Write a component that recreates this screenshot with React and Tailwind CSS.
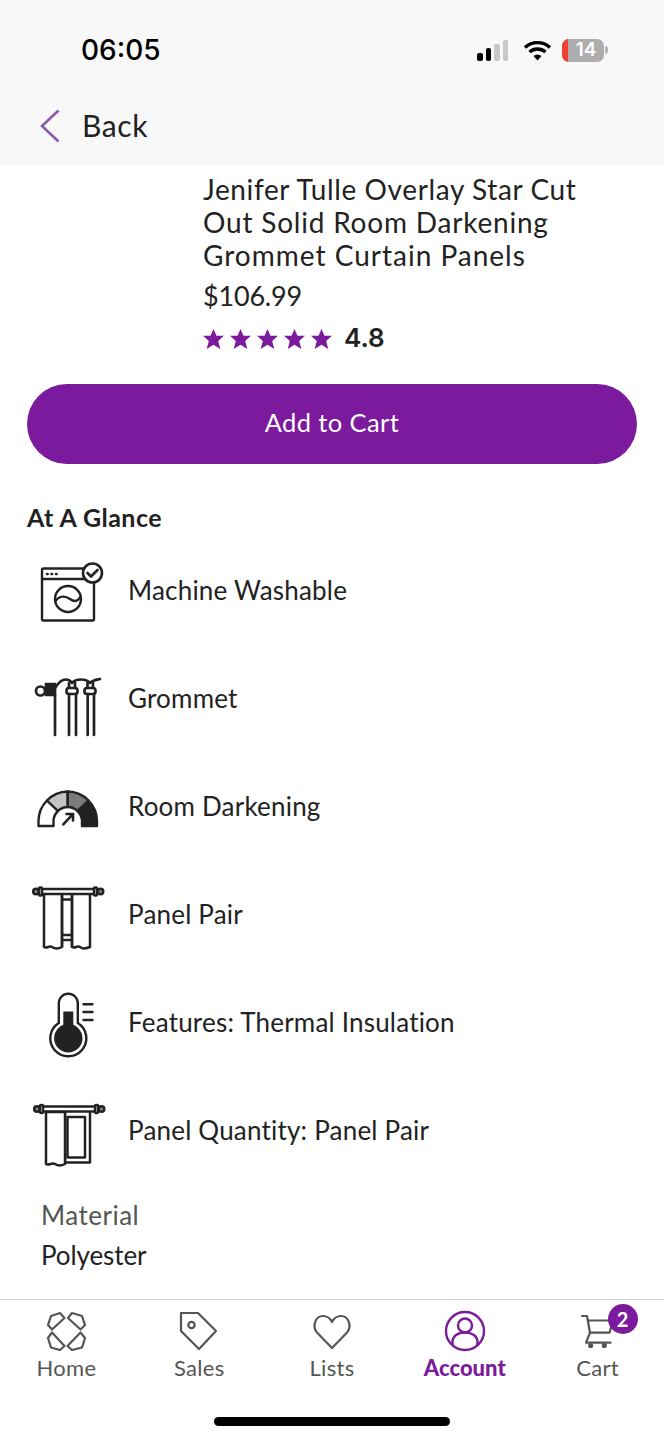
const FONT = "font-['Lato','Noto_Sans',sans-serif]";

function Washer() {
  return (
    <svg width="80" height="80" viewBox="0 0 80 80" fill="none" stroke="#222" strokeWidth="2.4" strokeLinejoin="round" strokeLinecap="round">
      <rect x="13" y="17.5" width="52" height="52" rx="1.5" />
      <path d="M13 28H65" />
      <path d="M18 23h.6M22.5 23h.6M27 23h.6" strokeWidth="2.6" />
      <circle cx="39" cy="48" r="13" />
      <path d="M26.500 50C31 44 37 45 41 48S48 51 51.500 46" />
      <circle cx="63.500" cy="22" r="9.500" fill="#fff" strokeWidth="2.6" />
      <path d="M58.500 22l3.500 3.500 6.500-6.500" strokeWidth="2.600" />
    </svg>
  );
}

function GrommetIcon() {
  return (
    <svg width="80" height="80" viewBox="0 0 80 80" fill="none" stroke="#222" strokeWidth="2.7" strokeLinecap="round" strokeLinejoin="round">
      <circle cx="11.500" cy="32" r="4.500" />
      <rect x="17" y="25" width="9" height="11" fill="#222" />
      <path d="M26 29C29 24 33 20.500 37 20.500S41 21.500 43 24C45 21.500 48 20.500 52 20.500S59 21.500 61 24C63 21.500 66 21 71 20" />
      <rect x="37.500" y="29" width="11" height="6" rx="2.500" />
      <rect x="55.500" y="29" width="11" height="6" rx="2.500" />
      <path d="M40 24V29M46 24V29M58.500 24V29M64 24V29" />
      <path d="M26 36V76M40 35V76M47 35V76M58.700 35V76M65 35V76" />
    </svg>
  );
}

function GaugeIcon() {
  return (
    <svg width="80" height="80" viewBox="0 0 80 80" stroke="#222" strokeWidth="2.4" strokeLinejoin="round" strokeLinecap="round">
      <path d="M9.500 59V54A29.500 29.500 0 0 1 18 33.500L29 44A14 14 0 0 0 24.500 54V59Z" fill="#fff" />
      <path d="M18 33.500A29.500 29.500 0 0 1 38.700 24.500V40A14 14 0 0 0 29 44Z" fill="#c4c4c4" />
      <path d="M38.700 24.500A29.500 29.500 0 0 1 59.500 33.500L48.500 44A14 14 0 0 0 38.700 40Z" fill="#7b7b7b" />
      <path d="M59.500 33.500A29.500 29.500 0 0 1 68 54V59H53V54A14 14 0 0 0 48.500 44Z" fill="#222" />
      <path d="M34.300 57.300L43.700 47.300M37.500 47H44V53.500" fill="none" strokeWidth="2.600" />
    </svg>
  );
}

function PanelPair() {
  return (
    <svg width="80" height="80" viewBox="0 0 80 80" fill="none" stroke="#222" strokeWidth="2.5" strokeLinejoin="round">
      <rect x="12" y="14" width="54" height="5" fill="#fff" />
      <ellipse cx="7" cy="16.500" rx="2.800" ry="2.800" fill="#888" />
      <ellipse cx="71.500" cy="16.500" rx="2.800" ry="2.800" fill="#888" />
      <rect x="10" y="12.500" width="3" height="8" rx="1" fill="#fff" />
      <rect x="65" y="12.500" width="3" height="8" rx="1" fill="#fff" />
      <path d="M15 19V72C18 74 20 70 23 72S29 74 33 72V19" />
      <path d="M43 19V72C46 74 48 70 51 72S55 74 61 72V19" />
      <path d="M33 19V72M43 19V72M33 24.500H43M33 60H43M33 65H43" />
    </svg>
  );
}

function ThermoIcon() {
  return (
    <svg width="80" height="80" viewBox="0 0 80 80" fill="none" stroke="#222" strokeWidth="2.400" strokeLinecap="round">
      <path d="M29.800 40V20.200A9.500 9.500 0 0 1 48.800 20.200V40A18 18 0 1 1 29.800 40Z" />
      <circle cx="39.300" cy="55.300" r="13" fill="#222" />
      <rect x="34.300" y="28.500" width="10" height="20" fill="#222" stroke="none" />
      <path d="M54.500 21.300H63.500M54.500 29H63.500M54.500 37H63.500" />
    </svg>
  );
}

function PanelQuantity() {
  return (
    <svg width="80" height="80" viewBox="0 0 80 80" fill="none" stroke="#222" strokeWidth="2.500" strokeLinejoin="round">
      <rect x="13" y="15.500" width="54" height="5" fill="#fff" />
      <ellipse cx="8" cy="18" rx="2.800" ry="2.800" fill="#888" />
      <ellipse cx="72.500" cy="18" rx="2.800" ry="2.800" fill="#888" />
      <rect x="11" y="14" width="3" height="8" rx="1" fill="#fff" />
      <rect x="66" y="14" width="3" height="8" rx="1" fill="#fff" />
      <path d="M36 21V71.500H61V21" />
      <rect x="38.500" y="26" width="17.500" height="40.500" />
      <path d="M17 21V73C20 75 23 71 26 73S32 75 36 73V21Z" fill="#fff" />
    </svg>
  );
}

function HomeIcon() {
  return (
    <svg width="40" height="40" viewBox="-20 -20 40 40" fill="none" stroke="#555" strokeWidth="2.200" strokeLinejoin="round">
      <path d="M-18 -6L-15 -15L-6 -18L-1.500 -13L-14 -1.500Z" />
      <path d="M6 -18L16 -15L19 -6L14.500 -1.500L2 -13Z" />
      <path d="M-14 1.500L-1.500 15L-6 19L-15 16.500L-18 7Z" />
      <path d="M14.500 1.500L19 7L16 16.500L6 19L1.500 15Z" />
    </svg>
  );
}

function TagIcon() {
  return (
    <svg width="40" height="40" viewBox="-20 -20 40 40" fill="none" stroke="#555" strokeWidth="2.200" strokeLinejoin="round">
      <path d="M-18 -18H-1L17 0L0 18L-18 0Z" />
      <circle cx="-7.500" cy="-6" r="3.200" />
    </svg>
  );
}

function HeartIcon() {
  return (
    <svg width="40" height="40" viewBox="-20 -20 40 40" fill="none" stroke="#555" strokeWidth="2.200" strokeLinejoin="round">
      <path d="M0 17L-15 1.500C-20 -4 -17 -15 -9 -15C-5 -15 -2 -13 0 -9C2 -13 5 -15 9 -15C17 -15 20 -4 15 1.500Z" />
    </svg>
  );
}

function AccountIcon() {
  return (
    <svg width="42" height="42" viewBox="-21 -21 42 42" fill="none" stroke="#7b1a9c" strokeWidth="2.400">
      <circle cx="0" cy="0" r="19" />
      <circle cx="0" cy="-5.500" r="7" />
      <path d="M-12.500 14V11C-12.500 5 -7 1.500 0 1.500S12.500 5 12.500 11V14" />
    </svg>
  );
}

function CartIcon() {
  return (
    <svg width="40" height="40" viewBox="0 0 40 40" fill="none" stroke="#555" strokeWidth="2.200" strokeLinecap="round" strokeLinejoin="round">
      <path d="M4 5H9L12 21.700H31.500L35 9.500H10" />
      <path d="M12 21.700L8 31.700H32.500" />
      <circle cx="12.700" cy="34.500" r="1.500" fill="#555" />
      <circle cx="26.300" cy="34.500" r="1.500" fill="#555" />
    </svg>
  );
}

function Star() {
  return (
    <svg width="21" height="20" viewBox="0 0 24 23" fill="#7b1a9c">
      <path d="M12 0L15.400 7.800H24L17.400 13.800L19.800 23L12 18.200L4.200 23L6.600 13.800L0 7.800H8.600Z" />
    </svg>
  );
}

const GLANCE = [
  { icon: Washer, label: 'Machine Washable' },
  { icon: GrommetIcon, label: 'Grommet' },
  { icon: GaugeIcon, label: 'Room Darkening' },
  { icon: PanelPair, label: 'Panel Pair' },
  { icon: ThermoIcon, label: 'Features: Thermal Insulation' },
  { icon: PanelQuantity, label: 'Panel Quantity: Panel Pair' },
];

const NAV = [
  { icon: HomeIcon, label: 'Home' },
  { icon: TagIcon, label: 'Sales' },
  { icon: HeartIcon, label: 'Lists' },
  { icon: AccountIcon, label: 'Account', active: true },
  { icon: CartIcon, label: 'Cart', badge: 2 },
];

function StatusBar() {
  return (
    <div className="flex h-[100px] items-center justify-between pl-[81px] pr-[56px]">
      <span className="font-['Inter',sans-serif] text-[28px] font-medium text-black">06:05</span>
      <div className="flex items-center">
        <div className="flex h-[21px] items-end gap-[3px]">
          <div className="h-[8px] w-[5.500px] rounded-[2px] bg-black" />
          <div className="h-[13px] w-[5.500px] rounded-[2px] bg-black" />
          <div className="h-[17px] w-[5.500px] rounded-[2px] bg-[#c8c8c8]" />
          <div className="h-[21px] w-[5.500px] rounded-[2px] bg-[#c8c8c8]" />
        </div>
        <svg className="ml-[15px]" width="29" height="21" viewBox="0 0 29 21" fill="none" stroke="#000" strokeWidth="3.400">
          <path d="M2 7.500C9 1 20 1 27 7.500" />
          <path d="M6.500 12C11 8 18 8 22.500 12" />
          <path d="M14.500 20.500L10.500 16C13 14 16 14 18.500 16Z" fill="#000" stroke="none" />
        </svg>
        <div className="ml-[10px] flex items-center gap-[1px]">
          <div className="flex h-[23px] w-[42px] items-center overflow-hidden rounded-[7px] bg-[#adadad]">
            <div className="h-full w-[6px] bg-[#f0402e]" />
            <span className="flex-1 text-center font-['Inter',sans-serif] text-[19px] font-semibold text-white">14</span>
          </div>
          <div className="h-[8px] w-[3px] rounded-r-full bg-[#b5b5b5]" />
        </div>
      </div>
    </div>
  );
}

export default function App() {
  return (
    <div className={`flex h-[1440px] w-[664px] flex-col overflow-hidden bg-white text-[#222] ${FONT}`}>
      <header className="h-[165px] shrink-0 bg-[#f8f8f8]">
        <StatusBar />
        <div className="flex h-[52px] items-center pl-[40px]">
          <svg width="20" height="34" viewBox="0 0 20 34" fill="none" stroke="#8f5aae" strokeWidth="2.600">
            <path d="M18.500 1.500L2 17L18.500 32.500" />
          </svg>
          <span className="ml-[22px] pb-[2px] text-[30px] tracking-[0.6px]">Back</span>
        </div>
      </header>

      <main className="flex-1">
        <div className="pl-[203px] pt-[8px]">
          <h1 className="text-[28px] leading-[33px]">
            <div className="tracking-[0.62px]">Jenifer Tulle Overlay Star Cut</div>
            <div className="tracking-[0.8px]">Out Solid Room Darkening</div>
            <div className="tracking-[1px]">Grommet Curtain Panels</div>
          </h1>
          <div className="mt-[7px] text-[27px] leading-[34px] tracking-[-0.2px]">$106.99</div>
          <div className="mt-[5px] flex h-[40px] items-center">
            <div className="mt-[2px] flex gap-[6px]">
              {[0, 1, 2, 3, 4].map((i) => <Star key={i} />)}
            </div>
            <span className="ml-[12px] pb-[2px] font-['Inter',sans-serif] text-[26px] font-semibold">4.8</span>
          </div>
        </div>

        <div className="px-[27px] pt-[26px]">
          <button className="h-[80px] w-full rounded-full bg-[#7b1a9c] pb-[4px] text-[25.500px] tracking-[0.4px] text-white">Add to Cart</button>
          <h2 className="mt-[36px] text-[25px] font-bold leading-[34px] tracking-[0.45px]">At A Glance</h2>
        </div>

        <div className="mt-[3px] pl-[29px]">
          {GLANCE.map(({ icon: Icon, label }) => (
            <div key={label} className="flex h-[108px] items-center gap-[19px]">
              <Icon />
              <span className="pb-[2px] text-[26px] tracking-[0.2px]">{label}</span>
            </div>
          ))}
        </div>

        <div className="mt-[10px] pl-[41px] text-[26px] leading-[40px]">
          <div className="tracking-[0.5px] text-[#555]">Material</div>
          <div className="tracking-[-0.1px]">Polyester</div>
        </div>
      </main>

      <nav className="relative h-[141px] shrink-0 border-t border-[#d4d4d4]">
        <div className="grid grid-cols-5">
          {NAV.map(({ icon: Icon, label, active, badge }) => (
            <div key={label} className="flex flex-col items-center pt-[10px]">
              <div className="relative flex h-[42px] items-center justify-center">
                <Icon />
                {badge && (
                  <span className="absolute left-[30px] top-[-6px] flex h-[30px] w-[30px] items-center justify-center rounded-full bg-[#7b1a9c] text-[20px] font-bold text-white">{badge}</span>
                )}
              </div>
              <span className={`mt-[2px] text-[22px] leading-[28px] ${active ? 'font-black text-[#7b1a9c]' : 'tracking-[0.3px] text-[#555]'}`}>{label}</span>
            </div>
          ))}
        </div>
        <div className="absolute bottom-[14px] left-[214px] h-[9px] w-[236px] rounded-full bg-black" />
      </nav>
    </div>
  );
}
